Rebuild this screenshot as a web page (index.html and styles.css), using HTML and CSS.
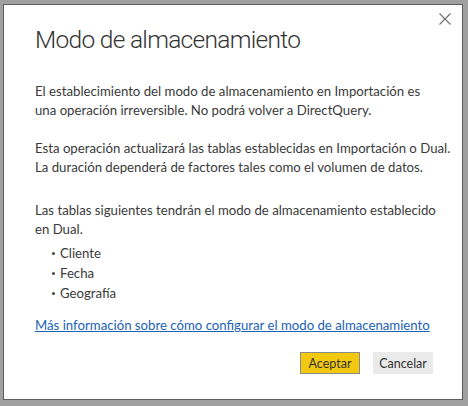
FILE: index.html
```html
<!DOCTYPE html>
<html lang="es">
<head>
<meta charset="utf-8">
<link rel="stylesheet" href="styles.css">
</head>
<body>
<div class="dialog">
  <button class="close" aria-label="Cerrar">
    <svg width="12" height="12" viewBox="0 0 12 12"><path d="M0.5 0.5 L11.5 11.5 M11.5 0.5 L0.5 11.5" stroke="#6e6e6e" stroke-width="1.1" fill="none"/></svg>
  </button>
  <h1 class="title">Modo de almacenamiento</h1>
  <p class="para p1">El establecimiento del modo de almacenamiento en Importación es<br>una operación irreversible. No podrá volver a DirectQuery.</p>
  <p class="para p2">Esta operación actualizará las tablas establecidas en Importación o Dual.<br>La duración dependerá de factores tales como el volumen de datos.</p>
  <p class="para p3">Las tablas siguientes tendrán el modo de almacenamiento establecido<br>en Dual.</p>
  <ul class="list">
    <li>Cliente</li>
    <li>Fecha</li>
    <li>Geografía</li>
  </ul>
  <a class="link" href="#">Más información sobre cómo configurar el modo de almacenamiento</a>
  <div class="actions">
    <button class="btn primary">Aceptar</button>
    <button class="btn secondary">Cancelar</button>
  </div>
</div>
</body>
</html>
```
FILE: styles.css
```css
html, body {
  margin: 0;
  padding: 0;
}
body {
  background: #a0a0a0;
  padding: 4px 5px 6px 3px;
  font-family: "Lato", "Open Sans", sans-serif;
  height: 406px;
  box-sizing: border-box;
}
.dialog {
  position: relative;
  background: #ffffff;
  border: 1px solid #5c5c5c;
  height: 396px;
  box-sizing: border-box;
  padding: 17px 31px 0 31px;
  color: #3a3a3a;
  white-space: nowrap;
}
.close {
  position: absolute;
  top: 7px;
  right: 10px;
  width: 14px;
  height: 14px;
  padding: 0;
  border: 0;
  background: none;
  display: flex;
  align-items: center;
  justify-content: center;
}
.title {
  margin: 0 0 24px 0;
  font-family: "Roboto", "Open Sans", sans-serif;
  font-weight: 300;
  font-size: 24.5px;
  letter-spacing: -0.7px;
  line-height: 36px;
  color: #333333;
}
.para {
  margin: 0;
  font-size: 13.2px;
  line-height: 19px;
}
.p2 {
  margin-top: 19px;
}
.p3 {
  margin-top: 24px;
}
.list {
  margin: 4px 0 0 0;
  padding: 0 0 0 25px;
  font-size: 13.2px;
  line-height: 20px;
}
.list li {
  list-style: none;
  position: relative;
}
.list li::before {
  content: "";
  position: absolute;
  left: -8px;
  top: 9px;
  width: 3px;
  height: 3px;
  border-radius: 50%;
  background: #444;
}
.link {
  display: block;
  margin-top: 13px;
  font-size: 13.2px;
  line-height: 19px;
  color: #1a62b8;
}
.actions {
  display: flex;
  justify-content: flex-end;
  gap: 13px;
  margin-top: 17px;
  margin-right: -2px;
}
.btn {
  height: 22px;
  width: 60px;
  font-family: "Lato", "Open Sans", sans-serif;
  font-size: 12.5px;
  padding: 0;
  color: #333;
}
.primary {
  background: #f2c811;
  border: 1px solid #8a8a8a;
}
.secondary {
  background: #eaeaea;
  border: 1px solid #eaeaea;
}
```
